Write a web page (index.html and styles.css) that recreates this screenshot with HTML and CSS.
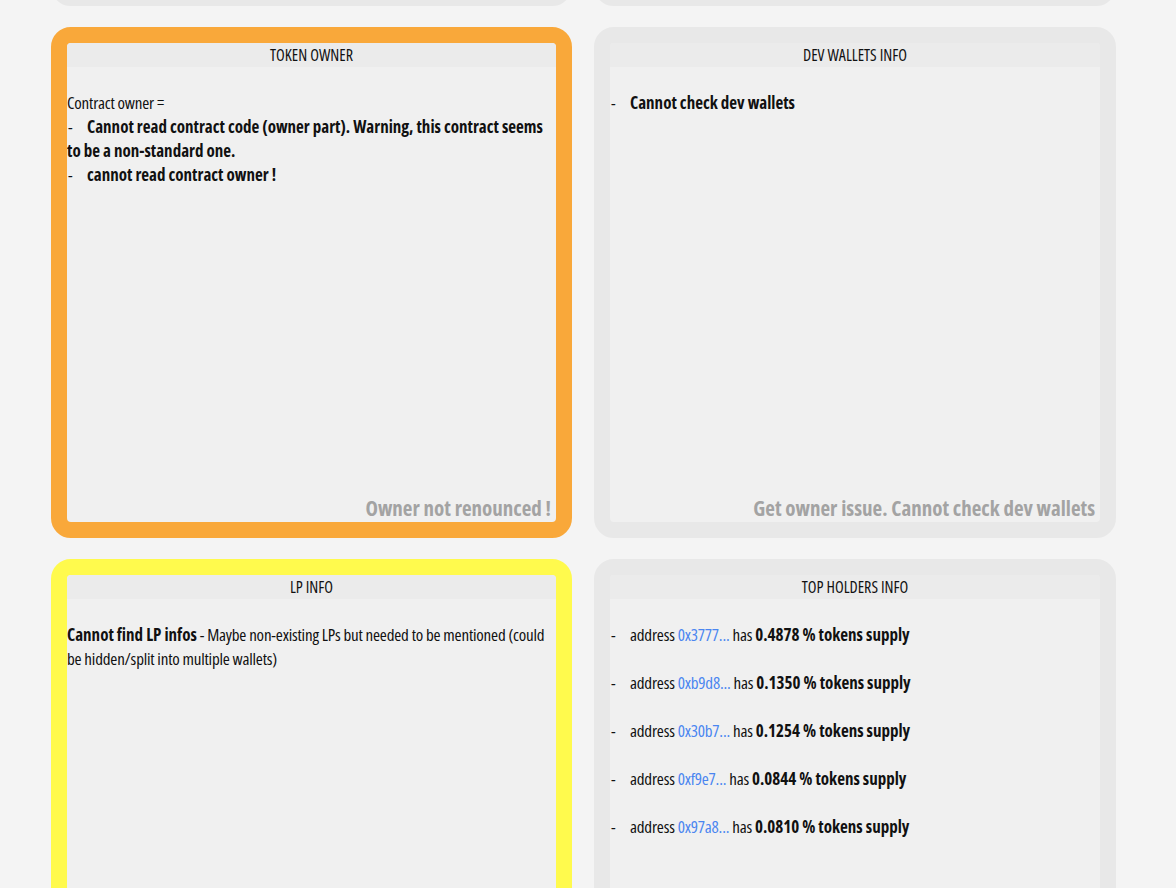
FILE: index.html
```html
<!DOCTYPE html>
<html lang="en">
<head>
    <meta charset="UTF-8">
    <meta name="viewport" content="width=device-width, initial-scale=1.0">
    <title>Token Audit</title>
    <link rel="stylesheet" href="styles.css">
</head>
<body>
    <div class="board">
        <!-- first row, scrolled out of view -->
        <section class="card card-neutral">
            <div class="card-inner"></div>
        </section>
        <section class="card card-neutral">
            <div class="card-inner"></div>
        </section>

        <section class="card card-warn">
            <div class="card-inner">
                <h2 class="card-title">TOKEN OWNER</h2>
                <div class="card-body">
                    Contract owner =<br>
                    <span class="dash">-</span><b>Cannot read contract code (owner part). Warning, this contract seems to be a non-standard one.</b><br>
                    <span class="dash">-</span><b>cannot read contract owner !</b>
                </div>
                <div class="card-status">Owner not renounced !</div>
            </div>
        </section>

        <section class="card card-neutral">
            <div class="card-inner">
                <h2 class="card-title">DEV WALLETS INFO</h2>
                <div class="card-body">
                    <span class="dash">-</span><b>Cannot check dev wallets</b>
                </div>
                <div class="card-status">Get owner issue. Cannot check dev wallets</div>
            </div>
        </section>

        <section class="card card-caution">
            <div class="card-inner">
                <h2 class="card-title">LP INFO</h2>
                <div class="card-body">
                    <b>Cannot find LP infos</b> - Maybe non-existing LPs but needed to be mentioned (could be hidden/split into multiple wallets)
                </div>
            </div>
        </section>

        <section class="card card-neutral">
            <div class="card-inner">
                <h2 class="card-title">TOP HOLDERS INFO</h2>
                <ul class="card-body holders">
                    <li><span class="dash">-</span>address <a href="#">0x3777...</a> has <b>0.4878 % tokens supply</b></li>
                    <li><span class="dash">-</span>address <a href="#">0xb9d8...</a> has <b>0.1350 % tokens supply</b></li>
                    <li><span class="dash">-</span>address <a href="#">0x30b7...</a> has <b>0.1254 % tokens supply</b></li>
                    <li><span class="dash">-</span>address <a href="#">0xf9e7...</a> has <b>0.0844 % tokens supply</b></li>
                    <li><span class="dash">-</span>address <a href="#">0x97a8...</a> has <b>0.0810 % tokens supply</b></li>
                </ul>
            </div>
        </section>
    </div>
</body>
</html>
```

FILE: styles.css
```css
:root {
    --page-bg: #f4f4f4;
    --card-border: #e8e8e8;
    --card-bg: #f0f0f0;
    --title-bg: #ebebeb;
    --warn-color: #f9a83a;
    --caution-color: #fffa4d;
    --text-color: #111111;
    --muted-color: #a3a3a3;
    --link-color: #4a86f0;
}
* { margin: 0; padding: 0; box-sizing: border-box; }
body { background-color: var(--page-bg); color: var(--text-color); font-family: "Open Sans", sans-serif; font-stretch: 75%; font-size: 17px; }
/* page is scrolled: first row only shows its bottom edge */
.board { display: grid; grid-template-columns: 521px 522px; column-gap: 22px; row-gap: 21px; padding-left: 51px; margin-top: -505px; }
.card { height: 511px; border: 16px solid var(--card-border); border-radius: 20px; background-color: var(--card-border); }
.card-warn { border-color: var(--warn-color); background-color: var(--warn-color); }
.card-caution { border-color: var(--caution-color); background-color: var(--caution-color); }
.card-inner { height: 100%; display: flex; flex-direction: column; background-color: var(--card-bg); border-radius: 4px; overflow: hidden; }
.card-title { background-color: var(--title-bg); font-size: 16px; font-weight: normal; line-height: 24px; text-align: center; }
.card-body { flex: 1; padding-top: 24px; line-height: 24px; letter-spacing: -0.2px; }
.card-body b { font-weight: bold; letter-spacing: 0; }
.dash { display: inline-block; width: 20px; padding-left: 1px; }
.card-status { padding: 0 5px 0 0; text-align: right; font-size: 21px; font-weight: bold; line-height: 27px; color: var(--muted-color); }
.holders { list-style: none; }
.holders li { margin-bottom: 24px; }
.holders a { color: var(--link-color); text-decoration: none; }
```
